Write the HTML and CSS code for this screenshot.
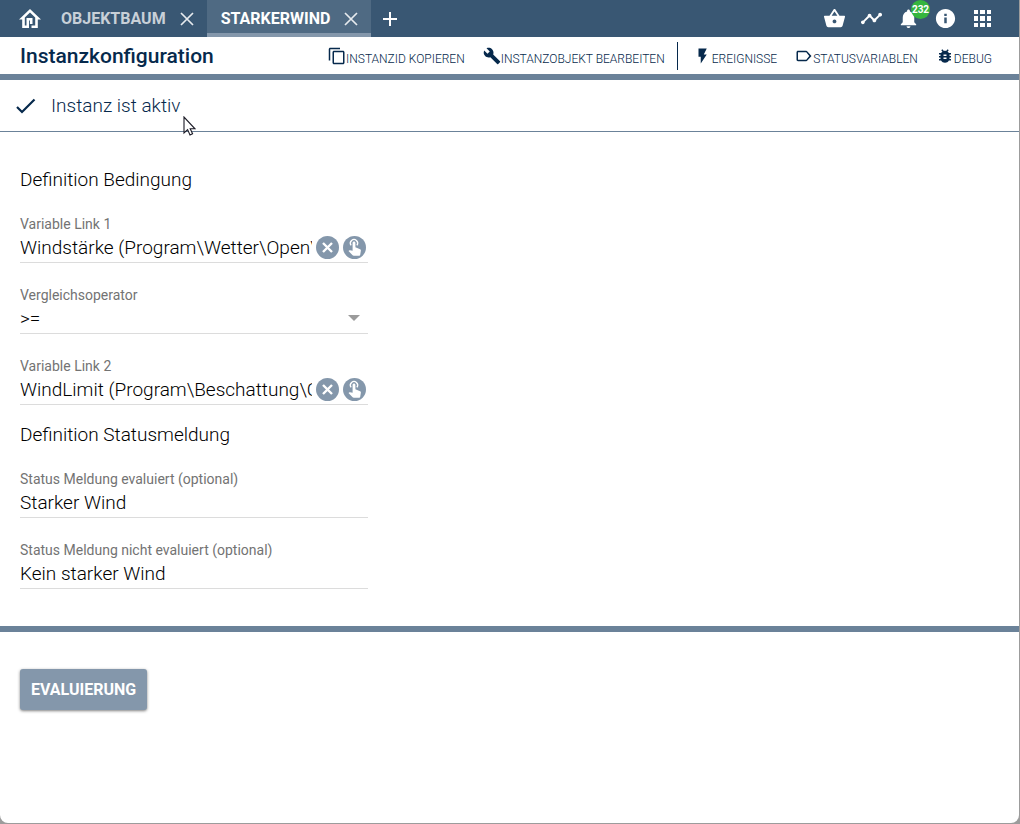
FILE: index.html
```html
<!DOCTYPE html>
<html lang="de">
<head>
<meta charset="utf-8">
<meta name="viewport" content="width=device-width, initial-scale=1">
<title>Instanzkonfiguration</title>
<link rel="stylesheet" href="styles.css">
</head>
<body>
<div class="window">
  <header class="topbar">
    <nav class="tabs" aria-label="Tabs">
      <button class="home" type="button" aria-label="Start">
        <svg width="22" height="20" viewBox="0 0 22 20"><path fill="currentColor" fill-rule="evenodd" d="M11 0l11 10.500h-3.200V19h-6.300v-2.600h3.700V8.400L11 3.600 5.800 8.400v8h1.700V9h6v6h-2.600v-3.400H10V19H3.200v-8.500H0z"/></svg>
      </button>
      <div class="tab">
        <a class="tab-name" href="#objektbaum">OBJEKTBAUM</a>
        <button class="close" type="button" aria-label="Objektbaum schließen"><svg width="14" height="14" viewBox="0 0 14 14"><path d="M1 1l12 12M13 1L1 13" fill="none" stroke="currentColor" stroke-width="1.700"/></svg></button>
      </div>
      <div class="tab tab-active">
        <a class="tab-name" href="#starkerwind" aria-current="page">STARKERWIND</a>
        <button class="close" type="button" aria-label="StarkerWind schließen"><svg width="14" height="14" viewBox="0 0 14 14"><path d="M1 1l12 12M13 1L1 13" fill="none" stroke="currentColor" stroke-width="1.700"/></svg></button>
      </div>
      <button class="add" type="button" aria-label="Neuer Tab"><svg width="14" height="14" viewBox="0 0 14 14"><path d="M7 0v14M0 7h14" stroke="currentColor" stroke-width="2"/></svg></button>
    </nav>
    <div class="tools">
      <button class="tool" type="button" aria-label="Store"><svg width="23" height="23" viewBox="0 0 24 24"><path fill="currentColor" d="M17.210 9l-4.380-6.560c-.190-.280-.510-.420-.830-.420s-.640.140-.830.430L6.790 9H2c-.550 0-1 .450-1 1 0 .090.010.180.040.270l2.540 9.270c.230.840 1 1.460 1.920 1.460h13c.920 0 1.690-.620 1.930-1.460l2.540-9.270L23 10c0-.550-.450-1-1-1h-4.790zM9 9l3-4.400L15 9H9zm3 8c-1.100 0-2-.900-2-2s.900-2 2-2 2 .900 2 2-.900 2-2 2z"/></svg></button>
      <button class="tool" type="button" aria-label="Verlauf"><svg width="23" height="23" viewBox="0 0 24 24"><path fill="currentColor" d="M23 8c0 1.100-.900 2-2 2-.180 0-.350-.020-.510-.070l-3.560 3.550c.050.160.070.340.070.520 0 1.100-.900 2-2 2s-2-.900-2-2c0-.180.020-.360.070-.520l-2.550-2.550c-.160.050-.340.070-.520.070s-.360-.020-.520-.070l-4.550 4.560c.050.160.070.330.070.510 0 1.100-.900 2-2 2s-2-.900-2-2 .900-2 2-2c.180 0 .350.020.510.070l4.560-4.550C8.020 9.360 8 9.180 8 9c0-1.100.900-2 2-2s2 .900 2 2c0 .180-.020.360-.070.520l2.550 2.550c.160-.050.340-.070.520-.070s.360.020.520.070l3.550-3.560C19.020 8.350 19 8.180 19 8c0-1.100.900-2 2-2s2 .900 2 2z"/></svg></button>
      <button class="tool" type="button" aria-label="Meldungen"><svg width="23" height="23" viewBox="0 0 24 24"><path fill="currentColor" d="M12 22c1.100 0 2-.900 2-2h-4c0 1.100.890 2 2 2zm6-6v-5c0-3.070-1.640-5.640-4.500-6.320V4c0-.830-.670-1.500-1.500-1.500s-1.500.670-1.500 1.500v.680C7.630 5.360 6 7.920 6 11v5l-2 2v1h16v-1l-2-2z"/></svg><span class="badge">232</span></button>
      <button class="tool" type="button" aria-label="Information"><svg width="23" height="23" viewBox="0 0 24 24"><path fill="currentColor" fill-rule="evenodd" d="M12 2C6.480 2 2 6.480 2 12s4.480 10 10 10 10-4.480 10-10S17.520 2 12 2zm1.300 15h-2.600v-6h2.600v6zm0-7.500h-2.600V7h2.600v2.500z"/></svg></button>
      <button class="tool" type="button" aria-label="Apps"><svg width="23" height="23" viewBox="0 0 23 23"><path fill="currentColor" d="M3 3h4v4H3zM9 3h5v4H9zM16 3h4v4h-4zM3 9h4v5H3zM9 9h5v5H9zM16 9h4v5h-4zM3 16h4v4H3zM9 16h5v4H9zM16 16h4v4h-4z"/></svg></button>
    </div>
  </header>

  <div class="titlebar">
    <h1>Instanzkonfiguration</h1>
    <div class="actions">
      <button class="action" type="button"><svg width="18" height="18" viewBox="0 0 24 24"><path fill="currentColor" d="M16 1H3c-1.100 0-2 .900-2 2v15h2V3h13V1zm4 4H8c-1.100 0-2 .900-2 2v14c0 1.100.900 2 2 2h12c1.100 0 2-.900 2-2V7c0-1.100-.900-2-2-2zm0 16H8V7h12v14z"/></svg><span>INSTANZID KOPIEREN</span></button>
      <button class="action" type="button"><svg width="18" height="18" viewBox="0 0 24 24"><path fill="currentColor" d="M22.700 19l-9.100-9.100c.900-2.300.400-5-1.500-6.900-2-2-5-2.400-7.400-1.300L9 6 6 9 1.600 4.700C.400 7.100.900 10.100 2.900 12.100c1.900 1.900 4.600 2.400 6.900 1.500l9.100 9.100c.400.400 1 .400 1.400 0l2.300-2.300c.500-.400.500-1.100.100-1.400z"/></svg><span>INSTANZOBJEKT BEARBEITEN</span></button>
      <span class="divider"></span>
      <button class="action" type="button"><svg width="18" height="18" viewBox="0 0 24 24"><path fill="currentColor" d="M6 2v11h3v9l8-12h-4l4-8z"/></svg><span>EREIGNISSE</span></button>
      <button class="action" type="button"><svg width="18" height="18" viewBox="0 0 24 24"><path fill="currentColor" d="M16.500 5.840C16.140 5.330 15.550 5 14.880 5L4 5.010C2.900 5.010 2 5.900 2 7v10c0 1.100.900 1.990 2 1.990L14.880 19c.670 0 1.260-.330 1.620-.840L22 12l-5.500-6.160zM15 17H4V7h11l4 5-4 5z"/></svg><span>STATUSVARIABLEN</span></button>
      <button class="action" type="button"><svg width="18" height="18" viewBox="0 0 24 24"><path fill="currentColor" d="M20 8h-2.810c-.450-.780-1.070-1.450-1.820-1.960L17 4.410 15.590 3l-2.170 2.170C12.960 5.060 12.490 5 12 5s-.960.060-1.410.170L8.410 3 7 4.410l1.620 1.630C7.880 6.550 7.260 7.220 6.810 8H4v2h2.090c-.050.330-.090.660-.090 1v1H4v2h2v1c0 .340.040.670.090 1H4v2h2.810c1.040 1.790 2.970 3 5.190 3s4.150-1.210 5.190-3H20v-2h-2.090c.050-.330.090-.660.090-1v-1h2v-2h-2v-1c0-.340-.040-.670-.090-1H20V8zm-6 8h-4v-2h4v2zm0-4h-4v-2h4v2z"/></svg><span>DEBUG</span></button>
    </div>
  </div>

  <div class="status">
    <svg width="20" height="16" viewBox="0 0 20 16"><path d="M1 9l5 5L18.500 1.500" fill="none" stroke="currentColor" stroke-width="2.200"/></svg>
    <span>Instanz ist aktiv</span>
    <svg class="cursor" width="13" height="20" viewBox="0 0 13 20"><path d="M1 1v16l3.600-3.400L7 19l2.600-1.200-2.400-5H12z" fill="#fff" stroke="#1b1b26" stroke-width="1.100"/></svg>
  </div>

  <main class="form">
    <h2>Definition Bedingung</h2>
    <div class="field">
      <label for="link1">Variable Link 1</label>
      <div class="control">
        <input id="link1" type="text" value="Windstärke (Program\Wetter\Open\Weather)">
        <button class="round" type="button" aria-label="Link 1 löschen"><svg width="23" height="23" viewBox="0 0 23 23"><path d="M7 7l9 9M16 7l-9 9" stroke="currentColor" stroke-width="2.400"/></svg></button>
        <button class="round" type="button" aria-label="Link 1 auswählen"><svg width="23" height="23" viewBox="0 0 23 23"><use href="#touch"/></svg></button>
      </div>
    </div>
    <div class="field">
      <label for="operator">Vergleichsoperator</label>
      <div class="control">
        <select id="operator"><option>&gt;=</option></select>
        <svg class="arrow" width="12" height="6" viewBox="0 0 12 6"><path d="M0 0h12L6 6z" fill="currentColor"/></svg>
      </div>
    </div>
    <div class="field">
      <label for="link2">Variable Link 2</label>
      <div class="control">
        <input id="link2" type="text" value="WindLimit (Program\Beschattung\Config)">
        <button class="round" type="button" aria-label="Link 2 löschen"><svg width="23" height="23" viewBox="0 0 23 23"><path d="M7 7l9 9M16 7l-9 9" stroke="currentColor" stroke-width="2.400"/></svg></button>
        <button class="round" type="button" aria-label="Link 2 auswählen"><svg width="23" height="23" viewBox="0 0 23 23"><g id="touch"><path d="M8.100 9.300A3.600 3.600 0 1 1 13.900 9.300" fill="none" stroke="currentColor" stroke-width="1.300"/><path fill="currentColor" d="M9.600 6.800a1.400 1.400 0 0 1 2.800 0v4.400l4.700 2c.600.300.900.800.800 1.400l-.7 4.200c-.1.600-.6 1-1.200 1h-5.300c-.4 0-.8-.2-1.100-.5l-4.100-4.200.7-.7c.2-.2.500-.3.800-.2l2.600.6z"/></g></svg></button>
      </div>
    </div>
    <h2 class="second">Definition Statusmeldung</h2>
    <div class="field">
      <label for="msg-on">Status Meldung evaluiert (optional)</label>
      <div class="control"><input id="msg-on" type="text" value="Starker Wind"></div>
    </div>
    <div class="field">
      <label for="msg-off">Status Meldung nicht evaluiert (optional)</label>
      <div class="control"><input id="msg-off" type="text" value="Kein starker Wind"></div>
    </div>
  </main>

  <footer class="footer">
    <button class="primary" type="button">EVALUIERUNG</button>
  </footer>
</div>
</body>
</html>
```

FILE: styles.css
```css
* { box-sizing: border-box; }

body {
  margin: 0;
  background: #9c9c9c;
  color: #06294c;
  font-family: Roboto, "Liberation Sans", sans-serif;
}

button {
  margin: 0;
  padding: 0;
  border: 0;
  background: none;
  color: inherit;
  font: inherit;
  cursor: pointer;
}

svg { display: block; flex: none; }

.window {
  display: flex;
  flex-direction: column;
  min-height: calc(100vh - 1px);
  margin: 0 1px 1px 0;
  background: #fff;
  border-radius: 0 0 8px 8px;
}

/* Top bar */
.topbar {
  display: flex;
  justify-content: space-between;
  height: 37px;
  background: #395773;
  color: #fff;
}

.tabs { display: flex; align-items: stretch; }
.home { padding: 0 6px 0 19px; }

.tab {
  display: flex;
  align-items: center;
  gap: 14px;
  padding: 0 13px 0 14px;
  color: #c8d0d8;
  font-size: 16px;
  font-weight: 700;
}

.tab-name { color: inherit; text-decoration: none; }
.close { color: #e6eaee; }

.tab-active {
  background: #4f6a83;
  color: #fff;
  box-shadow: inset 0 -4px #8497ab;
}

.add { padding: 0 12px; }

.tools {
  display: flex;
  align-items: center;
  gap: 14px;
  padding-right: 25px;
}

.tool { position: relative; }

.badge {
  position: absolute;
  top: -7px;
  right: -10px;
  width: 19px;
  height: 19px;
  border-radius: 50%;
  background: #35b53f;
  font-size: 10px;
  font-weight: 700;
  line-height: 19px;
  text-align: center;
}

/* Title bar */
.titlebar {
  display: flex;
  align-items: center;
  justify-content: space-between;
  height: 43px;
  padding: 0 27px 0 20px;
  border-bottom: 6px solid #6b8299;
}

h1 { margin: 0; font-size: 21px; font-weight: 500; }

.actions { display: flex; align-items: center; gap: 18px; }

.action {
  display: flex;
  align-items: center;
  font-size: 12px;
  font-weight: 300;
}

.action span { padding-top: 6px; }

.divider {
  width: 1px;
  height: 28px;
  margin-left: -6px;
  margin-right: -2px;
  background: #06294c;
}

/* Instance status */
.status {
  position: relative;
  display: flex;
  align-items: center;
  gap: 15px;
  height: 52px;
  padding: 0 16px;
  border-bottom: 1px solid #6b8299;
  font-size: 19px;
  font-weight: 300;
}

.cursor { position: absolute; left: 183px; top: 36px; }

/* Form */
.form {
  display: flex;
  flex-direction: column;
  gap: 24px;
  padding: 36px 20px 37px;
  border-bottom: 6px solid #6b8299;
}

h2 {
  margin: 0;
  color: #000;
  font-size: 19px;
  font-weight: 300;
  line-height: 24px;
}

.second { margin-top: -6px; }

.field {
  width: 100%;
  max-width: 348px;
  border-bottom: 1px solid #dcdcdc;
}

label {
  display: block;
  color: #737373;
  font-size: 14px;
  line-height: 16px;
}

.control {
  display: flex;
  align-items: center;
  gap: 4px;
  height: 30px;
  padding-right: 2px;
}

input,
select {
  flex: 1;
  min-width: 0;
  height: 30px;
  margin: 0;
  padding: 0;
  border: 0;
  background: none;
  color: #000;
  font: 300 19px Roboto, "Liberation Sans", sans-serif;
  appearance: none;
}

.arrow { margin-right: 6px; color: #9b9b9b; }

.round {
  flex: none;
  border-radius: 50%;
  background: #8497ab;
  color: #fff;
}

/* Footer */
.footer { padding: 37px 20px; }

.primary {
  height: 41px;
  padding: 0 11px;
  border-radius: 3px;
  background: #8497ab;
  box-shadow: 0 1px 3px rgba(0, 0, 0, 0.5);
  color: #fff;
  font-size: 16px;
  font-weight: 700;
}
```
